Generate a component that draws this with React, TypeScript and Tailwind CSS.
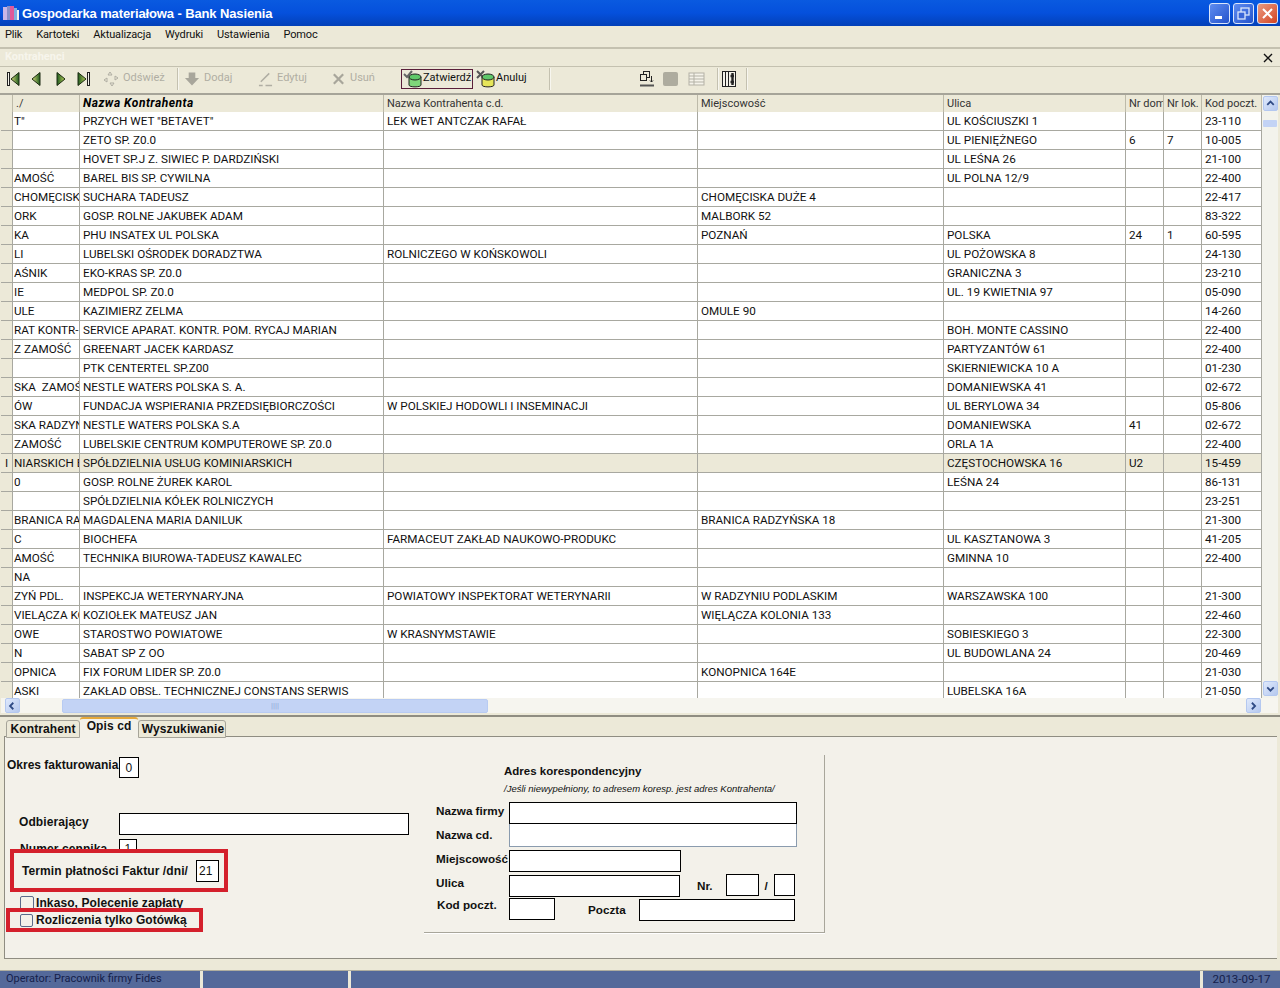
import { ReactNode } from "react";

const rows: string[][] = [
  ['T"', 'PRZYCH WET "BETAVET"', "LEK WET ANTCZAK RAFAŁ", "", "UL KOŚCIUSZKI 1", "", "", "23-110"],
  ["", "ZETO SP. Z0.0", "", "", "UL PIENIĘŻNEGO", "6", "7", "10-005"],
  ["", "HOVET SP.J Z. SIWIEC P. DARDZIŃSKI", "", "", "UL LEŚNA 26", "", "", "21-100"],
  ["AMOŚĆ", "BAREL BIS SP. CYWILNA", "", "", "UL POLNA 12/9", "", "", "22-400"],
  ["CHOMĘCISKA", "SUCHARA TADEUSZ", "", "CHOMĘCISKA DUŻE 4", "", "", "", "22-417"],
  ["ORK", "GOSP. ROLNE JAKUBEK ADAM", "", "MALBORK 52", "", "", "", "83-322"],
  ["KA", "PHU INSATEX UL POLSKA", "", "POZNAŃ", "POLSKA", "24", "1", "60-595"],
  ["LI", "LUBELSKI OŚRODEK DORADZTWA", "ROLNICZEGO W KOŃSKOWOLI", "", "UL POŻOWSKA 8", "", "", "24-130"],
  ["AŚNIK", "EKO-KRAS SP. Z0.0", "", "", "GRANICZNA 3", "", "", "23-210"],
  ["IE", "MEDPOL SP. Z0.0", "", "", "UL. 19 KWIETNIA 97", "", "", "05-090"],
  ["ULE", "KAZIMIERZ ZELMA", "", "OMULE 90", "", "", "", "14-260"],
  ["RAT KONTR-", "SERVICE APARAT. KONTR. POM. RYCAJ MARIAN", "", "", "BOH. MONTE CASSINO", "", "", "22-400"],
  ["Z ZAMOŚĆ", "GREENART JACEK KARDASZ", "", "", "PARTYZANTÓW 61", "", "", "22-400"],
  ["", "PTK CENTERTEL SP.Z00", "", "", "SKIERNIEWICKA 10 A", "", "", "01-230"],
  ["SKA  ZAMOŚĆ", "NESTLE WATERS POLSKA S. A.", "", "", "DOMANIEWSKA 41", "", "", "02-672"],
  ["ÓW", "FUNDACJA WSPIERANIA PRZEDSIĘBIORCZOŚCI", "W POLSKIEJ HODOWLI I INSEMINACJI", "", "UL BERYLOWA 34", "", "", "05-806"],
  ["SKA RADZYŃ", "NESTLE WATERS POLSKA S.A", "", "", "DOMANIEWSKA", "41", "", "02-672"],
  ["ZAMOŚĆ", "LUBELSKIE CENTRUM KOMPUTEROWE SP. Z0.0", "", "", "ORLA 1A", "", "", "22-400"],
  ["NIARSKICH E", "SPÓŁDZIELNIA USŁUG KOMINIARSKICH", "", "", "CZĘSTOCHOWSKA 16", "U2", "", "15-459"],
  ["0", "GOSP. ROLNE ŻUREK KAROL", "", "", "LEŚNA 24", "", "", "86-131"],
  ["", "SPÓŁDZIELNIA KÓŁEK ROLNICZYCH", "", "", "", "", "", "23-251"],
  ["BRANICA RA", "MAGDALENA MARIA DANILUK", "", "BRANICA RADZYŃSKA 18", "", "", "", "21-300"],
  ["C", "BIOCHEFA", "FARMACEUT ZAKŁAD NAUKOWO-PRODUKC", "", "UL KASZTANOWA 3", "", "", "41-205"],
  ["AMOŚĆ", "TECHNIKA BIUROWA-TADEUSZ KAWALEC", "", "", "GMINNA 10", "", "", "22-400"],
  ["NA", "", "", "", "", "", "", ""],
  ["ZYŃ PDL.", "INSPEKCJA WETERYNARYJNA", "POWIATOWY INSPEKTORAT WETERYNARII", "W RADZYNIU PODLASKIM", "WARSZAWSKA 100", "", "", "21-300"],
  ["VIELĄCZA KO", "KOZIOŁEK MATEUSZ JAN", "", "WIĘLĄCZA KOLONIA 133", "", "", "", "22-460"],
  ["OWE", "STAROSTWO POWIATOWE", "W KRASNYMSTAWIE", "", "SOBIESKIEGO 3", "", "", "22-300"],
  ["N", "SABAT SP Z OO", "", "", "UL BUDOWLANA 24", "", "", "20-469"],
  ["OPNICA", "FIX FORUM LIDER SP. Z0.0", "", "KONOPNICA 164E", "", "", "", "21-030"],
  ["ASKI", "ZAKŁAD OBSŁ. TECHNICZNEJ CONSTANS SERWIS", "", "", "LUBELSKA 16A", "", "", "21-050"],
];

const headers = ["./", "Nazwa Kontrahenta", "Nazwa Kontrahenta c.d.", "Miejscowość", "Ulica", "Nr dom", "Nr lok.", "Kod poczt."];
const gridCols = "grid grid-cols-[12px_67px_304px_314px_246px_182px_38px_38px_60px]";

const NavIcon = ({ dir, bar }: { dir: "l" | "r"; bar?: boolean }) => (
  <svg width="16" height="16" viewBox="0 0 16 16">
    <defs>
      <linearGradient id="navl" x1="0" x2="1" y1="0" y2="0">
        <stop offset="0" stopColor="#d6de7a" />
        <stop offset="1" stopColor="#1f5a1f" />
      </linearGradient>
      <linearGradient id="navr" x1="0" x2="1" y1="0" y2="0">
        <stop offset="0" stopColor="#1f5a1f" />
        <stop offset="1" stopColor="#b8cf5a" />
      </linearGradient>
    </defs>
    {bar && <rect x={dir === "l" ? 1.5 : 12.5} y="1.5" width="2" height="13" fill="#f5f3ea" stroke="#222" />}
    <path
      d={
        dir === "l"
          ? bar
            ? "M13 1.5 L5 8 L13 14.5 Z"
            : "M11 1.5 L3 8 L11 14.5 Z"
          : bar
            ? "M3 1.5 L11 8 L3 14.5 Z"
            : "M5 1.5 L13 8 L5 14.5 Z"
      }
      fill={dir === "l" ? "url(#navl)" : "url(#navr)"}
      stroke="#1c2a12"
    />
  </svg>
);

const DbIcon = ({ cross }: { cross?: boolean }) => (
  <svg width="20" height="18" viewBox="0 0 20 18">
    {cross ? (
      <path d="M1 1 L8 8 M8 1 L1 8" stroke="#555" strokeWidth="2" />
    ) : (
      <path d="M1 4 L4 7 L9 1" fill="none" stroke="#666" strokeWidth="2" />
    )}
    <path d="M6 7 V15 C6 17.5 18 17.5 18 15 V7" fill={cross ? "#e6e65a" : "#7fd67a"} stroke="#222" />
    <ellipse cx="12" cy="7" rx="6" ry="3" fill="#5fc86a" stroke="#222" />
  </svg>
);

const Tool = ({ icon, label }: { icon: ReactNode; label: string }) => (
  <div className="flex items-center gap-[4px] text-[#b0aea3]">
    {icon}
    <span>{label}</span>
  </div>
);

const Sep = () => <div className="h-[22px] w-[2px] border-l border-[#c4c1b0] bg-white/60" />;

const Box = ({ className }: { className: string }) => <div className={`border border-black bg-white ${className}`} />;

const ScrollBtn = ({ dir, className }: { dir: "u" | "d" | "l" | "r"; className?: string }) => {
  const d = { u: "M4 9 L8 5 L12 9", d: "M4 6 L8 10 L12 6", l: "M9 4 L5 8 L9 12", r: "M6 4 L10 8 L6 12" }[dir];
  return (
    <div className={`flex h-[15px] w-[15px] items-center justify-center rounded-[2px] border border-[#b4c8f0] bg-gradient-to-br from-[#dfe9fc] to-[#b5c8ee] ${className ?? ""}`}>
      <svg width="14" height="14" viewBox="0 0 16 16">
        <path d={d} fill="none" stroke="#2f4a84" strokeWidth="2.2" />
      </svg>
    </div>
  );
};

const WinBtn = ({ children, red }: { children: ReactNode; red?: boolean }) => (
  <div
    className={`flex h-[21px] w-[21px] items-center justify-center rounded-[3px] border border-[#dbe6fb] ${
      red ? "bg-gradient-to-br from-[#ea9a80] to-[#d2401c]" : "bg-gradient-to-br from-[#5f8cf0] to-[#2452cc]"
    }`}
  >
    {children}
  </div>
);

export default function App() {
  return (
    <div className="flex h-[988px] w-[1280px] flex-col overflow-hidden bg-[#ece9d8] font-['Roboto',sans-serif] text-[12px] text-[#111]">
      {/* Title bar */}
      <div className="flex h-[26px] items-center bg-gradient-to-b from-[#0a5ae0] via-[#0550dc] to-[#0340b8] pl-[2px] pr-[2px]">
        <svg width="18" height="18" viewBox="0 0 18 18">
          <rect x="1" y="3" width="4" height="13" fill="#c9b6e6" />
          <rect x="5" y="2" width="3" height="14" fill="#8a8fc8" />
          <rect x="8" y="2" width="4" height="14" fill="#e05a9a" />
          <rect x="12" y="4" width="3" height="12" fill="#7fb0e0" />
          <rect x="15" y="6" width="2" height="10" fill="#f2f2f2" />
        </svg>
        <span className="ml-[2px] mt-[1px] font-['Liberation_Sans',sans-serif] text-[13px] font-bold tracking-[-0.12px] text-white">Gospodarka materiałowa - Bank Nasienia</span>
        <div className="ml-auto flex gap-[3px]">
          <WinBtn>
            <div className="mt-[9px] mr-[3px] h-[3px] w-[7px] bg-white" />
          </WinBtn>
          <WinBtn>
            <svg width="13" height="13" viewBox="0 0 13 13" fill="none" stroke="#dbe6fb" strokeWidth="1.3">
              <rect x="4" y="1" width="8" height="7" />
              <rect x="1" y="5" width="7" height="7" fill="#3a66d8" />
            </svg>
          </WinBtn>
          <WinBtn red>
            <svg width="13" height="13" viewBox="0 0 13 13" stroke="white" strokeWidth="2">
              <path d="M2 2 L11 11 M11 2 L2 11" />
            </svg>
          </WinBtn>
        </div>
      </div>

      {/* Menu */}
      <div className="flex h-[19px] items-center gap-[14px] pl-[5px] text-[11px] tracking-[-0.15px]">
        {["Plik", "Kartoteki", "Aktualizacja", "Wydruki", "Ustawienia", "Pomoc"].map((m) => (
          <span key={m}>{m}</span>
        ))}
      </div>

      {/* Child window caption */}
      <div className="mt-[2px] flex h-[19px] items-center justify-between border-t-2 border-[#c4c1b0] pl-[5px] pr-[6px]">
        <span className="text-[11px] font-bold text-[#f7f5ec]">Kontrahenci</span>
        <svg width="12" height="12" viewBox="0 0 12 12" stroke="#111" strokeWidth="1.4">
          <path d="M2 2 L10 10 M10 2 L2 10" />
        </svg>
      </div>

      {/* Toolbar */}
      <div className="flex h-[26px] items-center border-t border-[#c4c1b0] pl-[6px] pb-[2px] text-[11px]">
        <div className="flex w-[91px] gap-[7px]">
          <NavIcon dir="l" bar />
          <NavIcon dir="l" />
          <NavIcon dir="r" />
          <NavIcon dir="r" bar />
        </div>
        <div className="ml-[6px] w-[74px]">
          <Tool
            label="Odśwież"
            icon={
              <svg width="16" height="16" viewBox="0 0 16 16" fill="none" stroke="#b0aea3">
                <path d="M7 1 L5 4 H9 Z M9 15 L7 12 H11 Z M1 9 L4 7 V11 Z M15 7 L12 5 V9 Z" />
              </svg>
            }
          />
        </div>
        <Sep />
        <div className="ml-[5px] w-[74px]">
          <Tool
            label="Dodaj"
            icon={
              <svg width="16" height="16" viewBox="0 0 17 16" fill="#a8a69b">
                <path d="M5 1 H12 V7 H16 L8.5 15 L1 7 H5 Z" />
              </svg>
            }
          />
        </div>
        <div className="w-[73px]">
          <Tool
            label="Edytuj"
            icon={
              <svg width="15" height="16" viewBox="0 0 16 16" stroke="#b0aea3" strokeWidth="1.6" fill="none">
                <path d="M3 11 L12 2 M1 15 H5 M8 15 H15" />
              </svg>
            }
          />
        </div>
        <div className="w-[70px]">
          <Tool
            label="Usuń"
            icon={
              <svg width="15" height="16" viewBox="0 0 16 16" stroke="#a8a69b" strokeWidth="2.4">
                <path d="M3 3 L13 13 M13 3 L3 13" />
              </svg>
            }
          />
        </div>
        <div className="flex h-[20px] w-[72px] items-center border border-[#5a1f3a] pl-[1px]">
          <DbIcon />
          <span className="whitespace-nowrap">Zatwierdź</span>
        </div>
        <div className="ml-[3px] flex w-[73px] items-center">
          <DbIcon cross />
          <span>Anuluj</span>
        </div>
        <Sep />
        <svg className="ml-[87px]" width="18" height="18" viewBox="0 0 18 18" fill="none" stroke="#222">
          <rect x="5.5" y="1.5" width="6" height="6" />
          <rect x="2.5" y="4.5" width="6" height="6" fill="#ece9d8" />
          <path d="M13.5 6 V12 M12 10.5 L13.5 12 L15 10.5" />
          <path d="M2 15.5 H16" strokeWidth="2" stroke="#555" />
        </svg>
        <div className="ml-[7px] h-[14px] w-[15px] rounded-[2px] bg-[#aeac9f]" />
        <svg className="ml-[10px]" width="18" height="16" viewBox="0 0 18 16" fill="#f5f3ea" stroke="#b3b1a5">
          <rect x="1" y="2" width="15" height="12" />
          <path d="M1 5 H16 M1 8 H16 M1 11 H16 M6 2 V14" />
        </svg>
        <div className="ml-[11px]">
          <Sep />
        </div>
        <svg className="ml-[2px]" width="16" height="18" viewBox="0 0 16 18" fill="none" stroke="#222">
          <rect x="1.5" y="1.5" width="13" height="15" fill="#f5f3ea" />
          <path d="M4.5 1.5 V16.5 M7.5 1.5 V16.5" />
          <path d="M11.5 3 V15 M9.5 6 H13 M9.5 12 H13" strokeWidth="2.4" />
        </svg>
        <div className="ml-[9px]">
          <Sep />
        </div>
      </div>

      {/* Grid */}
      <div className="mt-[1px] flex h-[620px] flex-col border-t-2 border-[#a6a499] pl-[1px] pr-[2px]">
        <div className="flex min-h-0 flex-1">
          <div className="flex min-w-0 flex-1 flex-col">
            <div className={`${gridCols} h-[17px] bg-[#ece9d8] text-[11px] text-[#333]`}>
              <div className="border-r border-[#bdbaa9]" />
              {headers.map((h, i) => (
                <div
                  key={h}
                  className={`overflow-hidden whitespace-nowrap border-r border-[#bdbaa9] pl-[3px] leading-[17px] ${
                    i === 1 ? "text-[12px] font-bold italic tracking-[0.5px] text-black" : ""
                  }`}
                >
                  {h}
                </div>
              ))}
            </div>
            <div className="min-h-0 flex-1 overflow-hidden bg-white">
              {rows.map((r, idx) => (
                <div key={idx} className={`${gridCols} h-[19px] text-[11.7px] ${idx === 18 ? "bg-[#ece9d8]" : ""}`}>
                  <div className="border-b border-r border-[#a8a8a0] bg-[#ece9d8] text-center leading-[18px]">{idx === 18 ? "I" : ""}</div>
                  {r.map((c, i) => (
                    <div
                      key={i}
                      className={`overflow-hidden whitespace-pre border-b border-r border-[#a8a8a0] leading-[18px] ${i === 0 ? "pl-[1px]" : "pl-[3px]"}`}
                    >
                      {c}
                    </div>
                  ))}
                </div>
              ))}
            </div>
          </div>
          {/* Vertical scrollbar */}
          <div className="flex w-[16px] flex-col items-center bg-[#f3f3ec] pt-[1px]">
            <ScrollBtn dir="u" />
            <div className="mt-[9px] h-[7px] w-[14px] rounded-[1px] bg-[#c3d3f5]" />
            <ScrollBtn dir="d" className="mt-auto mb-[2px]" />
          </div>
        </div>
        {/* Horizontal scrollbar */}
        <div className="flex h-[15px] items-center bg-[#f6f5ef] pl-[4px] pr-[17px]">
          <ScrollBtn dir="l" />
          <div className="ml-[42px] flex h-[14px] w-[426px] items-center justify-center rounded-[2px] border border-[#b8cbf2] bg-[#c3d3f5] text-[8px] text-[#8fa5d6]">
            ||||
          </div>
          <ScrollBtn dir="r" className="ml-auto" />
        </div>
      </div>

      {/* Tab area */}
      <div className="mt-[2px] border-t-2 border-[#8f8d82] pl-[4px] pr-[3px] font-['Liberation_Sans',sans-serif]">
        <div className="flex h-[21px] items-end pl-[2px] text-[12px] font-bold tracking-[0.1px]">
          <div className="flex h-[18px] w-[74px] items-center justify-center rounded-t-[3px] border border-[#a6a499] bg-[#ece9d8]">Kontrahent</div>
          <div className="flex h-[21px] w-[58px] items-start justify-center rounded-t-[3px] border-t-2 border-[#e6a93a] bg-[#f3f1e9] leading-[14px]">Opis cd</div>
          <div className="flex h-[18px] w-[88px] items-center justify-center rounded-t-[3px] border border-[#a6a499] bg-[#ece9d8] pl-[2px]">Wyszukiwanie</div>
        </div>
        <div className="-mt-[2px] flex h-[223px] border border-r-0 border-[#8f8d82] bg-[#f3f1ea] text-[12px] font-bold tracking-[0.1px]">
          {/* Left column */}
          <div className="w-[419px] shrink-0 pl-[2px]">
            <div className="mt-[20px] flex">
              <span className="-mt-[1px] w-[112px] whitespace-nowrap tracking-normal">Okres fakturowania</span>
              <div className="flex h-[21px] w-[20px] items-center justify-center border border-black bg-white text-[12px] font-normal">0</div>
            </div>
            <div className="mt-[35px] flex">
              <span className="w-[100px] pl-[12px] whitespace-nowrap box-content">Odbierający</span>
              <Box className="h-[22px] w-[290px]" />
            </div>
            <div className="mt-[4px] flex">
              <span className="w-[100px] pl-[13px] pt-[1px] whitespace-nowrap box-content">Numer cennika</span>
              <div className="-ml-[1px] flex h-[21px] w-[18px] justify-center border border-black bg-white text-[12px] font-normal">1</div>
            </div>
            {/* Red annotation over the price list row */}
            <div className="relative -mt-[11px] ml-[3px] flex h-[43px] w-[218px] items-center border-[4px] border-[#d4202c] bg-[#f3f1ea] pl-[8px]">
              <span className="whitespace-nowrap">Termin płatności Faktur /dni/</span>
              <div className="ml-[8px] h-[22px] w-[23px] border border-black bg-white pl-[2px] text-[12px] font-normal leading-[20px]">21</div>
            </div>
            <div className="mt-[2px] flex items-center pl-[13px]">
              <div className="h-[14px] w-[14px] rounded-[2px] border border-[#5a6a8a] bg-[#f3f1ea]" />
              <span className="ml-[2px] whitespace-nowrap">Inkaso, Polecenie zapłaty</span>
            </div>
            <div className="relative -mt-[4px] -ml-[1px] flex h-[24px] w-[197px] items-center border-[4px] border-[#d4202c] bg-[#f3f1ea] pl-[10px] tracking-normal">
              <div className="h-[13px] w-[13px] rounded-[2px] border border-[#5a6a8a] bg-[#f3f1ea]" />
              <span className="ml-[3px] whitespace-nowrap">Rozliczenia tylko Gotówką</span>
            </div>
          </div>

          {/* Correspondence address */}
          <div className="mt-[18px] h-[178px] w-[401px] border-b border-r border-[#a8a69b] bg-[#f3f1ea] pl-[12px] text-[11.7px] tracking-normal shadow-[0_1px_0_#fff]">
            <div className="pl-[68px] pt-[9px] leading-[15px]">
              <div className="text-[11.5px]">Adres korespondencyjny</div>
              <div className="mt-[2px] text-[9.5px] font-normal italic">/Jeśli niewypełniony, to adresem koresp. jest adres Kontrahenta/</div>
            </div>
            <div className="mt-[6px] flex">
              <span className="w-[73px] whitespace-nowrap">Nazwa firmy</span>
              <Box className="h-[22px] w-[288px]" />
            </div>
            <div className="flex">
              <span className="w-[73px] pt-[2px] whitespace-nowrap">Nazwa cd.</span>
              <div className="h-[23px] w-[288px] border border-t-0 border-[#8a9bae] bg-white" />
            </div>
            <div className="mt-[3px] flex">
              <span className="w-[73px] whitespace-nowrap">Miejscowość</span>
              <Box className="h-[22px] w-[172px]" />
            </div>
            <div className="mt-[2px] flex">
              <span className="w-[73px] whitespace-nowrap">Ulica</span>
              <Box className="mt-[1px] h-[22px] w-[171px]" />
              <span className="ml-[17px] pt-[3px]">Nr.</span>
              <Box className="ml-[13px] h-[22px] w-[33px]" />
              <span className="ml-[6px] pt-[3px]">/</span>
              <Box className="ml-[6px] h-[22px] w-[21px]" />
            </div>
            <div className="mt-[1px] flex">
              <span className="-mt-[2px] w-[73px] pl-[1px] whitespace-nowrap">Kod poczt.</span>
              <Box className="h-[22px] w-[46px]" />
              <span className="ml-[33px] pt-[3px]">Poczta</span>
              <Box className="ml-[13px] mt-[1px] h-[22px] w-[156px]" />
            </div>
          </div>
        </div>
      </div>

      {/* Status bar */}
      <div className="mt-auto flex h-[18px] gap-[3px] border-t border-[#b0ae9f] text-[11px] text-[#14204a]">
        <div className="flex w-[200px] items-center bg-[#54699a] pl-[6px]">Operator: Pracownik firmy Fides</div>
        <div className="w-[145px] bg-[#54699a]" />
        <div className="flex-1 bg-[#54699a]" />
        <div className="flex w-[77px] items-center justify-center bg-[#54699a] text-[11.5px]">2013-09-17</div>
      </div>
    </div>
  );
}
